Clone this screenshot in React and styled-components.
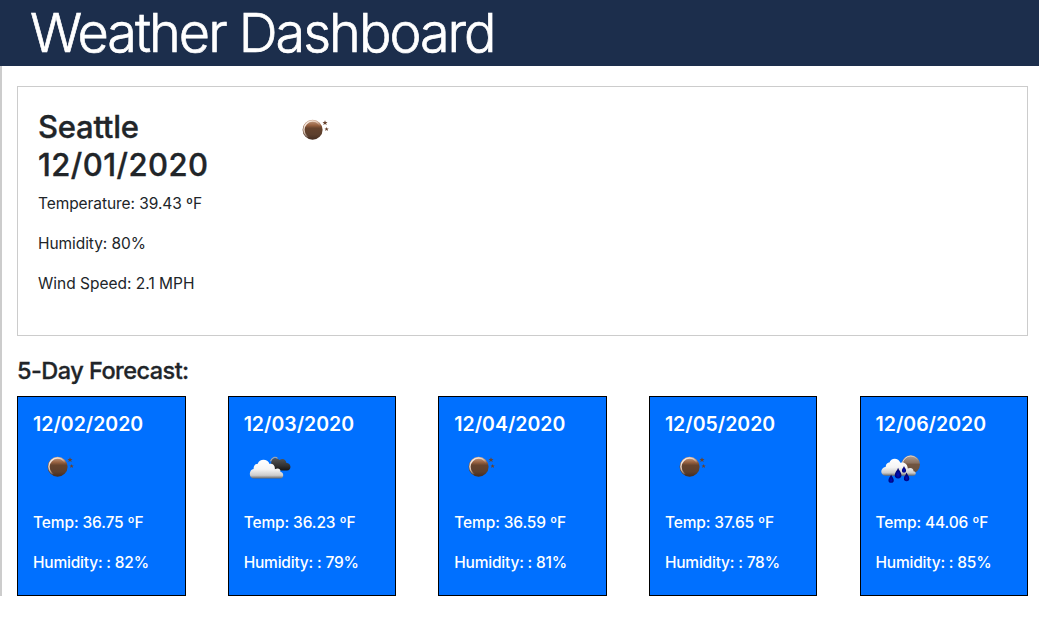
import React from "react";
import styled, { createGlobalStyle } from "styled-components";

const GlobalStyle = createGlobalStyle`
  *, *::before, *::after { box-sizing: border-box; }
  body {
    margin: 0;
    background: #fff;
    color: #212529;
    font-family: Inter, "Liberation Sans", sans-serif;
    font-size: 16px;
    line-height: 24px;
  }
`;

const Header = styled.header`
  height: 66px;
  padding-left: 30px;
  background: #1c2e4c;
  color: #fff;
`;

const Title = styled.h1`
  margin: 0;
  font-size: 54px;
  font-weight: 300;
  line-height: 66px;
  letter-spacing: -2px;
  white-space: nowrap;
  -webkit-text-stroke: 0.7px currentColor;
`;

const Main = styled.main`
  height: 530px;
  border-left: 2px solid #ccc;
  padding: 20px 11px 0 15px;
`;

const Today = styled.section`
  display: flex;
  height: 250px;
  padding: 21px 20px;
  border: 1px solid #ccc;
`;

const Summary = styled.div`
  width: 250px;
`;

const City = styled.h2`
  width: 180px;
  margin: 0 0 8px;
  font-size: 31px;
  font-weight: 500;
  line-height: 38px;
  -webkit-text-stroke: 0.35px currentColor;
`;

const CityLine = styled.span`
  display: block;
  letter-spacing: ${(p) => p.$spacing};
`;

const Detail = styled.p`
  margin: 0 0 16px;
  font-size: 15.5px;
  letter-spacing: ${(p) => p.$spacing || "-0.07px"};
  white-space: nowrap;
`;

const ForecastTitle = styled.h4`
  margin: 20px 0 11px;
  font-size: 23.5px;
  font-weight: 500;
  line-height: 29px;
  letter-spacing: -0.53px;
  -webkit-text-stroke: 0.3px currentColor;
`;

const Days = styled.section`
  display: flex;
  justify-content: space-between;
`;

const Day = styled.article`
  width: 168.5px;
  height: 200px;
  padding: 15px;
  border: 1px solid #000;
  background: #0070ff;
  color: #fff;
`;

const DayDate = styled.h5`
  margin: 0 0 5px;
  font-size: 19.5px;
  font-weight: 600;
  line-height: 24px;
  letter-spacing: 0;
`;

const Reading = styled(Detail)`
  font-weight: 500;
`;

const Icon = styled.svg`
  display: block;
  width: 50px;
  height: 50px;
`;

const TodayIcon = styled(Icon)`
  margin-top: -4px;
`;

const DayIcon = styled(Icon)`
  margin-bottom: 20px;
`;

const Gradients = () => (
  <svg width="0" height="0" style={{ display: "block" }}>
    <defs>
      <linearGradient id="moon" x1="0" y1="0" x2="0" y2="1">
        <stop offset="0" stopColor="#c9a48c" />
        <stop offset=".28" stopColor="#96603f" />
        <stop offset=".42" stopColor="#66432d" />
        <stop offset=".75" stopColor="#5c3f2d" />
        <stop offset="1" stopColor="#432c20" />
      </linearGradient>
      <linearGradient id="palemoon" x1="0" y1="0" x2="0" y2="1">
        <stop offset="0" stopColor="#b3a298" />
        <stop offset=".4" stopColor="#8b7261" />
        <stop offset=".5" stopColor="#705440" />
        <stop offset="1" stopColor="#665040" />
      </linearGradient>
      <linearGradient id="shine" x1="0" y1="0" x2=".8" y2=".8">
        <stop offset="0" stopColor="#fff" />
        <stop offset=".4" stopColor="#f3dccb" stopOpacity=".85" />
        <stop offset=".75" stopColor="#fff" stopOpacity="0" />
      </linearGradient>
      <linearGradient id="cloud" x1="0" y1="0" x2="0" y2="1">
        <stop offset="0" stopColor="#fff" />
        <stop offset=".5" stopColor="#f5f5f5" />
        <stop offset=".83" stopColor="#ccc" />
        <stop offset="1" stopColor="#666" />
      </linearGradient>
      <linearGradient id="dark" x1="0" y1="0" x2="0" y2="1">
        <stop offset="0" stopColor="#555" />
        <stop offset=".6" stopColor="#333" />
        <stop offset="1" stopColor="#151515" />
      </linearGradient>
      <radialGradient id="drop" cx=".5" cy=".65" r=".5">
        <stop offset="0" stopColor="#0010c0" />
        <stop offset="1" stopColor="#00006c" />
      </radialGradient>
    </defs>
  </svg>
);

const star = "M0-2.6.7-.8 2.5-.8 1.1.4 1.7 2.3 0 1.2-1.7 2.3-1.1.4-2.5-.8-.7-.8Z";
const drop = "M0-5C.7-2.6 3-1 3 1.6A3 3 0 0 1-3 1.6C-3-1-.7-2.6 0-5Z";

const Moon = () => (
  <>
    <circle cx="24.6" cy="25.8" r="10" fill="url(#moon)" />
    <circle cx="24.6" cy="25.8" r="8.7" fill="none" stroke="url(#shine)" strokeWidth="1.5" />
    <path d={star} fill="#67432f" transform="translate(37 18.8)" />
    <path d={star} fill="#67432f" transform="translate(38.6 25.1) scale(.85)" />
  </>
);

const Clouds = () => (
  <>
    <path d="M28 26C25 18 31 14.8 35.5 19C39 16.5 42.3 19 42.3 21.8C47.5 22 48 29.5 43 29.5H31C28 29.5 27 28 28 26Z" fill="url(#dark)" />
    <path d="M26.5 20.3C28.2 15.8 31.5 15.5 33.5 17.4" fill="none" stroke="#b0aaa4" strokeWidth="1.1" />
    <path d="M9 37.5A5 5 0 0 1 9.6 28C9.5 24 12 22.8 13.8 22.8C15 17.7 23.7 17.2 25.5 23C28.9 22.2 31.4 25 30.8 28.2C34.8 26.6 37 28.5 36.3 30.8C40.5 31.3 39.8 37.5 36.5 37.5Z" fill="url(#cloud)" />
  </>
);

const Rain = () => (
  <>
    <circle cx="34.8" cy="23.5" r="9.2" fill="url(#palemoon)" />
    <circle cx="34.8" cy="23.5" r="8.4" fill="none" stroke="url(#shine)" strokeWidth=".8" />
    <path d="M10 34.8C4 34.8 3.5 27 9.8 25.8C9.8 22.2 12.3 21.3 13.5 21.4C14.5 16.7 22.6 16 24.3 21.8C28 20.5 32 23.2 31.7 27.6C35.2 26 37.8 28 37.5 30.2C41.2 30.7 40 34.8 37 34.8Z" fill="url(#cloud)" />
    <path d={drop} fill="url(#drop)" transform="translate(22.1 32.3) scale(1.12)" />
    <path d={drop} fill="url(#drop)" transform="translate(28 28.6) scale(.7)" />
    <path d={drop} fill="url(#drop)" transform="translate(15.1 37.8) scale(.88)" />
    <path d={drop} fill="url(#drop)" transform="translate(30.6 36) scale(.9)" />
  </>
);

const drawings = { moon: Moon, clouds: Clouds, rain: Rain };

const forecast = [
  { date: "12/02/2020", icon: "moon", temp: "36.75", humidity: 82 },
  { date: "12/03/2020", icon: "clouds", temp: "36.23", humidity: 79 },
  { date: "12/04/2020", icon: "moon", temp: "36.59", humidity: 81 },
  { date: "12/05/2020", icon: "moon", temp: "37.65", humidity: 78 },
  { date: "12/06/2020", icon: "rain", temp: "44.06", humidity: 85 },
];

export default function App() {
  return (
    <>
      <GlobalStyle />
      <Gradients />
      <Header>
        <Title>Weather Dashboard</Title>
      </Header>
      <Main>
        <Today>
          <Summary>
            <City>
              <CityLine $spacing="-0.25px">Seattle</CityLine>
              <CityLine $spacing="0.45px">12/01/2020</CityLine>
            </City>
            <Detail>Temperature: 39.43 ºF</Detail>
            <Detail>Humidity: 80%</Detail>
            <Detail $spacing="0">Wind Speed: 2.1 MPH</Detail>
          </Summary>
          <TodayIcon viewBox="0 0 50 50">
            <Moon />
          </TodayIcon>
        </Today>
        <ForecastTitle>5-Day Forecast:</ForecastTitle>
        <Days>
          {forecast.map((day) => {
            const Drawing = drawings[day.icon];
            return (
              <Day key={day.date}>
                <DayDate>{day.date}</DayDate>
                <DayIcon viewBox="0 0 50 50">
                  <Drawing />
                </DayIcon>
                <Reading $spacing="-0.12px">Temp: {day.temp} ºF</Reading>
                <Reading $spacing="-0.2px">Humidity: : {day.humidity}%</Reading>
              </Day>
            );
          })}
        </Days>
      </Main>
    </>
  );
}
